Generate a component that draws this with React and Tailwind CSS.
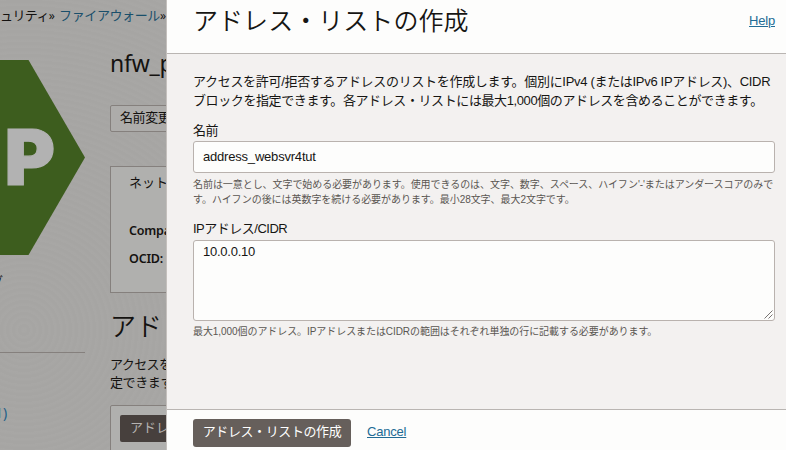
const uiFont =
  "font-['Liberation_Sans','Noto_Sans_CJK_JP',sans-serif]";
const brandFont =
  "font-['Noto_Sans','Noto_Sans_CJK_JP',sans-serif]";

function Line({ className = '', children }) {
  return <span className={`block whitespace-nowrap ${className}`}>{children}</span>;
}

function HexBadge() {
  return (
    <svg width="85" height="195" viewBox="0 0 85 195" className="block">
      <path d="M0 0H28.5L85 97.5L28.5 195H0Z" fill="#3d5d1e" />
      <text
        x="4.5"
        y="124.5"
        fontFamily="Inter"
        fontWeight="900"
        fontSize="77"
        fill="#b2b2b2"
        stroke="#b2b2b2"
        strokeWidth="1.2"
      >
        P
      </text>
    </svg>
  );
}

function Page() {
  return (
    <div
      className={`flex h-full w-[166px] shrink-0 flex-col overflow-hidden bg-[#a6a5a3] bg-[repeating-radial-gradient(circle_at_24px_330px,rgba(255,255,255,0.02)_0px,rgba(255,255,255,0.02)_2px,transparent_4px,transparent_6px)] text-[13px] text-[#141210] ${brandFont}`}
    >
      <nav className="flex h-[32px] shrink-0 items-center whitespace-nowrap">
        <span className="w-[49px] tracking-[-0.6px]">ュリティ</span>
        <span className="w-[12px] text-[12px]">»</span>
        <span className="w-[102px] tracking-[-0.4px] text-[#1a4f6b]">ファイアウォール</span>
        <span className="text-[12px]">»</span>
      </nav>
      <div className="flex flex-1 gap-[25px]">
        <aside className="w-[85px] shrink-0 pt-[28px]">
          <HexBadge />
          <div className="mt-[17px] -ml-[9px] h-[20px] text-[12px] leading-[20px]">グ</div>
          <div className="mt-[60px] h-px bg-[#85807d]" />
          <div className="mt-[50px] -ml-[5px] text-[14px] leading-[20px] text-[#1f5f88]">1)</div>
        </aside>
        <main className="w-[400px] shrink-0">
          <h1 className="mt-[14px] h-[34px] text-[23px] leading-[34px] tracking-[-0.2px]">nfw_policy</h1>
          <div className="mt-[25px] flex h-[27px] w-[82px] items-center rounded-[2px] border border-[#85807d] bg-[#adacaa] pb-[1px] pl-[9px] whitespace-nowrap tracking-[-0.4px]">
            名前変更
          </div>
          <section className="mt-[34px] h-[127px] border border-[#85807d] bg-[#b0b0ae] pt-[5px] pl-[18px]">
            <div className="h-[20px] leading-[20px]">ネットワーク</div>
            <div className="mt-[29px] h-[20px] text-[12.5px] leading-[20px] font-semibold tracking-[-0.2px]">Compartment:</div>
            <div className="mt-[8px] h-[20px] text-[12.5px] leading-[20px] font-semibold tracking-[-0.2px]">OCID:</div>
          </section>
          <h2 className="mt-[13px] h-[40px] text-[26px] leading-[40px] font-[350]">アドレス・リスト</h2>
          <p className="mt-[9px] leading-[18px]">
            <Line className="tracking-[-0.6px]">アクセスを許可</Line>
            <Line className="tracking-[-0.4px]">定できます。各</Line>
          </p>
          <div className="mt-[14px] h-[60px] rounded-[2px] border border-[#85807d] bg-[#b0b0ae] pt-[9px] pl-[9px]">
            <div className="flex h-[27px] w-[158px] items-center rounded-[2px] bg-[#47403d] pb-[2px] pl-[10px] whitespace-nowrap text-[#b5b3b1]">
              アドレス・リストの作成
            </div>
          </div>
        </main>
      </div>
    </div>
  );
}

function CreatePanel() {
  return (
    <div
      className={`flex h-full min-w-0 flex-1 flex-col border-l border-[#c4c0bd] bg-[#f3f1f0] text-[13px] text-[#161513] ${uiFont}`}
    >
      <header className="flex h-[54px] shrink-0 justify-between border-b border-[#b9b5b2] bg-[#fdfdfc] pr-[11px] pl-[26px]">
        <h1 className="mt-[2px] h-[38px] text-[25px] leading-[38px] font-[350] tracking-[0.05px]">アドレス・リストの作成</h1>
        <a className="mt-[11px] h-[20px] leading-[20px] tracking-[-0.2px] text-[#226b95] underline">Help</a>
      </header>

      <div className="flex-1 pt-[18px] pr-[11px] pl-[26px]">
        <p className="leading-[19px]">
          <Line className="tracking-[-0.31px]">
            アクセスを許可/拒否するアドレスのリストを作成します。個別にIPv4 (またはIPv6 IPアドレス)、CIDR
          </Line>
          <Line className="tracking-[-0.4px]">
            ブロックを指定できます。各アドレス・リストには最大1,000個のアドレスを含めることができます。
          </Line>
        </p>

        <label className="mt-[11px] block h-[20px] leading-[20px] tracking-[-0.4px]">名前</label>
        <div className="flex h-[32px] items-center rounded-[3px] border border-[#b9b2ae] bg-[#fdfdfc] pl-[9px] tracking-[-0.2px]">
          address_websvr4tut
        </div>
        <p className="mt-[4px] text-[10px] leading-[15px] text-[#5a5652]">
          <Line className="tracking-[-0.06px]">
            名前は一意とし、文字で始める必要があります。使用できるのは、文字、数字、スペース、ハイフン'-'またはアンダースコアのみで
          </Line>
          <Line className="tracking-[-0.05px]">す。ハイフンの後には英数字を続ける必要があります。最小28文字、最大2文字です。</Line>
        </p>

        <label className="mt-[12px] block h-[21px] leading-[20px] tracking-[-0.5px]">IPアドレス/CIDR</label>
        <div className="relative h-[81px] rounded-[3px] border border-[#b9b2ae] bg-[#fdfdfc] pt-[1px] pl-[9px] leading-[20px] tracking-[-0.25px]">
          10.0.0.10
          <svg width="9" height="9" viewBox="0 0 9 9" className="absolute right-[1px] bottom-[1px]">
            <path d="M0.5 8.5L8.5 0.5M4.5 8.5L8.5 4.5" stroke="#55514e" strokeWidth="0.8" />
          </svg>
        </div>
        <p className="mt-[3px] text-[10px] leading-[15px] tracking-[-0.07px] text-[#5a5652]">
          <Line>最大1,000個のアドレス。IPアドレスまたはCIDRの範囲はそれぞれ単独の行に記載する必要があります。</Line>
        </p>
      </div>

      <footer className="flex h-[41px] shrink-0 gap-[16px] border-t border-[#b9b5b2] bg-[#fdfdfc] pt-[9px] pl-[26px]">
        <button className="h-[28px] w-[158px] rounded-[3px] bg-[#665f5b] pb-[2px] whitespace-nowrap tracking-[-0.4px] text-white">
          アドレス・リストの作成
        </button>
        <a className="mt-[3px] h-[20px] leading-[20px] tracking-[-0.2px] text-[#226b95] underline">Cancel</a>
      </footer>
    </div>
  );
}

export default function App() {
  return (
    <div className="flex h-[450px] w-[786px] overflow-hidden">
      <Page />
      <CreatePanel />
    </div>
  );
}
